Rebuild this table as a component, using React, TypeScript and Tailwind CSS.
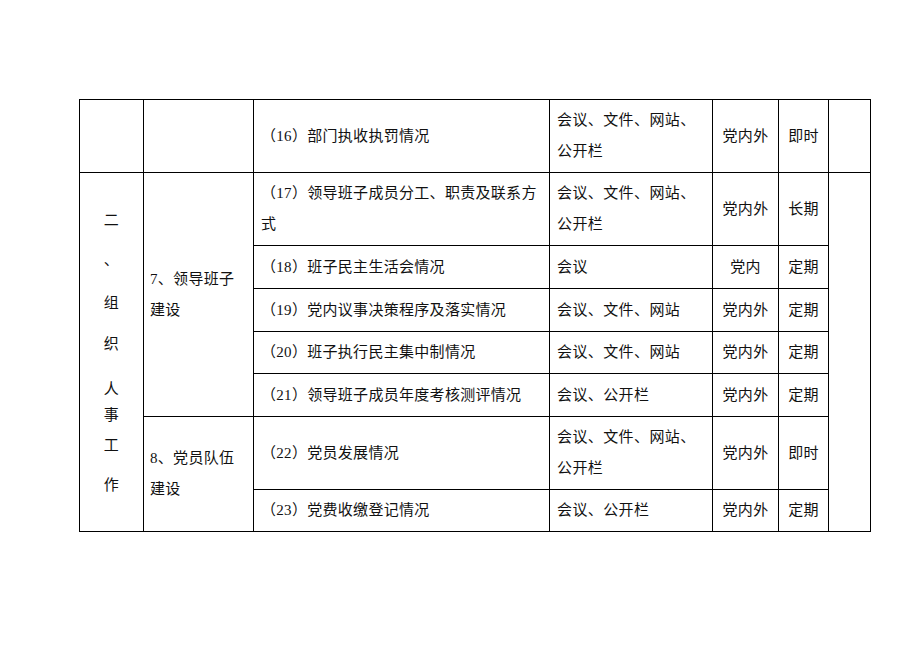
const cell = 'border border-black align-middle p-0';

type Row = {
  item: React.ReactNode;
  way: React.ReactNode;
  scope: string;
  time: string;
  h: string;
};

const rows17: Row[] = [
  {
    item: (
      <>
        （17）领导班子成员分工、职责及联系方
        <br />式
      </>
    ),
    way: (
      <>
        会议、文件、网站、
        <br />
        公开栏
      </>
    ),
    scope: '党内外',
    time: '长期',
    h: 'h-[73px]',
  },
  { item: '（18）班子民主生活会情况', way: '会议', scope: '党内', time: '定期', h: 'h-[43px]' },
  { item: '（19）党内议事决策程序及落实情况', way: '会议、文件、网站', scope: '党内外', time: '定期', h: 'h-[43px]' },
  { item: '（20）班子执行民主集中制情况', way: '会议、文件、网站', scope: '党内外', time: '定期', h: 'h-[42px]' },
  { item: '（21）领导班子成员年度考核测评情况', way: '会议、公开栏', scope: '党内外', time: '定期', h: 'h-[43px]' },
];

const rows22: Row[] = [
  {
    item: '（22）党员发展情况',
    way: (
      <>
        会议、文件、网站、
        <br />
        公开栏
      </>
    ),
    scope: '党内外',
    time: '即时',
    h: 'h-[73px]',
  },
  { item: '（23）党费收缴登记情况', way: '会议、公开栏', scope: '党内外', time: '定期', h: 'h-[42px]' },
];

// vertical heading in first column, spacing copied from the document
const vertical: { ch: string; mt: string }[] = [
  { ch: '二', mt: 'mt-0' },
  { ch: '、', mt: 'mt-[20px]' },
  { ch: '组', mt: 'mt-[23px]' },
  { ch: '织', mt: 'mt-[21px]' },
  { ch: '人', mt: 'mt-[25px]' },
  { ch: '事', mt: 'mt-[6px]' },
  { ch: '工', mt: 'mt-[10px]' },
  { ch: '作', mt: 'mt-[20px]' },
];

function Cells({ r }: { r: Row }) {
  return (
    <>
      <td className={`${cell} pl-[7px] leading-[31px]`}>{r.item}</td>
      <td className={`${cell} pl-[7px] leading-[31px] tracking-[0.4px]`}>{r.way}</td>
      <td className={`${cell} text-center`}>{r.scope}</td>
      <td className={`${cell} text-center`}>{r.time}</td>
    </>
  );
}

export default function App() {
  return (
    <div className="min-h-[651px] w-[920px] bg-white pt-[99px] pl-[79px] font-['Liberation_Serif','Noto_Sans_CJK_SC',serif] text-[15px] tracking-[0.3px] text-[#111]">
      <table className="w-[791px] table-fixed border-collapse">
        <colgroup>
          <col className="w-[64px]" />
          <col className="w-[110px]" />
          <col className="w-[296px]" />
          <col className="w-[163px]" />
          <col className="w-[66px]" />
          <col className="w-[50px]" />
          <col className="w-[42px]" />
        </colgroup>
        <tbody>
          <tr className="h-[73px]">
            <td className={cell}></td>
            <td className={cell}></td>
            <td className={`${cell} pl-[7px] leading-[31px]`}>（16）部门执收执罚情况</td>
            <td className={`${cell} pl-[7px] leading-[31px] tracking-[0.4px]`}>
              会议、文件、网站、
              <br />
              公开栏
            </td>
            <td className={`${cell} text-center`}>党内外</td>
            <td className={`${cell} text-center`}>即时</td>
            <td className={cell}></td>
          </tr>

          {rows17.map((r, i) => (
            <tr key={i} className={r.h}>
              {i === 0 && (
                <>
                  <td rowSpan={7} className={`${cell} text-center`}>
                    <div className="flex flex-col items-center">
                      {vertical.map((v, k) => (
                        <div key={k} className={`h-[20px] leading-[20px] ${v.mt}`}>
                          {v.ch}
                        </div>
                      ))}
                    </div>
                  </td>
                  <td rowSpan={5} className={`${cell} pl-[6px] leading-[31px]`}>
                    7、领导班子
                    <br />
                    建设
                  </td>
                </>
              )}
              <Cells r={r} />
              {i === 0 && <td rowSpan={7} className={cell}></td>}
            </tr>
          ))}

          {rows22.map((r, i) => (
            <tr key={i} className={r.h}>
              {i === 0 && (
                <td rowSpan={2} className={`${cell} pl-[6px] leading-[31px]`}>
                  8、党员队伍
                  <br />
                  建设
                </td>
              )}
              <Cells r={r} />
            </tr>
          ))}
        </tbody>
      </table>
    </div>
  );
}
